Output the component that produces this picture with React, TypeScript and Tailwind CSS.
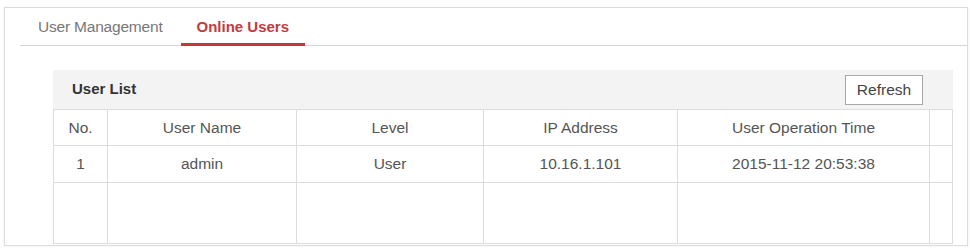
const columns = [
  { label: "No.", width: 54 },
  { label: "User Name", width: 189 },
  { label: "Level", width: 187 },
  { label: "IP Address", width: 194 },
  { label: "User Operation Time", width: 252 },
  { label: "", width: 23 },
];

const users = [["1", "admin", "User", "10.16.1.101", "2015-11-12 20:53:38", ""]];

export default function App() {
  return (
    <div
      className="h-[248px] w-[970px] overflow-hidden bg-white pl-[4px] pt-[7px]"
      style={{ fontFamily: '"Liberation Sans", Arial, sans-serif' }}
    >
      <div className="h-[239px] w-[964px] overflow-hidden border border-[#dcdcdc] shadow-[0_0_2px_rgba(0,0,0,0.08)]">
        {/* tabs */}
        <div className="ml-[15px] flex h-[38px] border-b border-[#d4d4d4]">
          <div className="-mb-px flex items-center border-b-[3px] border-transparent px-[18px] pt-[3px] text-[15.5px] tracking-[-0.2px] text-[#777]">
            User Management
          </div>
          <div className="-mb-px flex items-center border-b-[3px] border-[#c8363a] px-[16px] pt-[3px] text-[15px] font-bold text-[#c33b3f]">
            Online Users
          </div>
        </div>

        {/* user list panel */}
        <div className="ml-[48px] mr-[14px] mt-[24px]">
          <div className="flex h-[39px] items-center justify-between bg-[#f3f3f3] pl-[19px] pr-[30px]">
            <span className="text-[15px] font-bold text-[#333]">User List</span>
            <button className="h-[30px] w-[78px] border border-[#a8a8a8] bg-white text-[15.5px] text-[#444]">
              Refresh
            </button>
          </div>
          <table className="w-full table-fixed border-collapse text-[15.5px] text-[#555]">
            <colgroup>
              {columns.map((c, i) => (
                <col key={i} style={{ width: c.width }} />
              ))}
            </colgroup>
            <thead>
              <tr className="h-[36px]">
                {columns.map((c, i) => (
                  <th key={i} className="border border-[#dcdcdc] text-center font-normal">
                    {c.label}
                  </th>
                ))}
              </tr>
            </thead>
            <tbody>
              {users.map((row, r) => (
                <tr key={r} className="h-[37px]">
                  {row.map((cell, i) => (
                    <td key={i} className="border border-[#dcdcdc] text-center">
                      {cell}
                    </td>
                  ))}
                </tr>
              ))}
              <tr className="h-[61px]">
                {columns.map((_, i) => (
                  <td key={i} className="border border-[#dcdcdc]" />
                ))}
              </tr>
            </tbody>
          </table>
        </div>
      </div>
    </div>
  );
}
